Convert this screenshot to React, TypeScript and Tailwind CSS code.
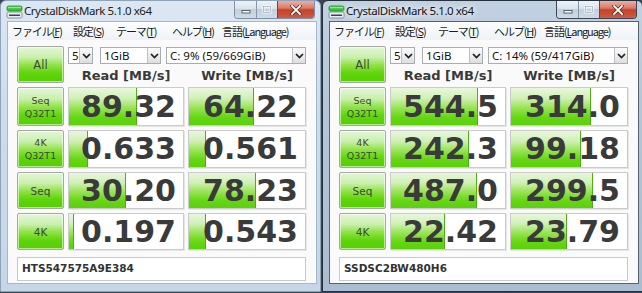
import React from 'react';

type Row = { label: string[]; read: string; write: string; rw: number; ww: number };

const leftRows: Row[] = [
  { label: ['Seq', 'Q32T1'], read: '89.32', write: '64.22', rw: 68, ww: 65 },
  { label: ['4K', 'Q32T1'], read: '0.633', write: '0.561', rw: 19, ww: 17 },
  { label: ['Seq'], read: '30.20', write: '78.23', rw: 57, ww: 67 },
  { label: ['4K'], read: '0.197', write: '0.543', rw: 5, ww: 17 },
];

const rightRows: Row[] = [
  { label: ['Seq', 'Q32T1'], read: '544.5', write: '314.0', rw: 87, ww: 80 },
  { label: ['4K', 'Q32T1'], read: '242.3', write: '99.18', rw: 78, ww: 70 },
  { label: ['Seq'], read: '487.0', write: '299.5', rw: 86, ww: 82 },
  { label: ['4K'], read: '22.42', write: '23.79', rw: 54, ww: 56 },
];

const GREEN_BTN =
  'flex flex-col items-center justify-center rounded-[2px] border border-[#a4a9a2] bg-[linear-gradient(180deg,#e4f6d8_0%,#c8efab_30%,#8fe245_52%,#5fd40c_75%,#55cf00_100%)] shadow-[inset_0_0_0_1px_rgba(255,255,255,0.55)] text-[#3d4838]';

function AppIcon() {
  return (
    <svg width="17" height="14" viewBox="0 0 17 14">
      <rect x="1" y="1" width="15" height="5" rx="1.5" fill="#3cc23c" stroke="#1f8a2a" strokeWidth="0.8" />
      <rect x="2" y="1.8" width="13" height="1.4" fill="#8fe88f" />
      <rect x="1" y="7" width="15" height="6" rx="1.5" fill="#e9eef2" stroke="#6f7a86" strokeWidth="0.8" />
      <rect x="3" y="9.5" width="11" height="1.5" fill="#3c4650" />
    </svg>
  );
}

function CaptionButtons({ active }: { active: boolean }) {
  return (
    <div
      className={
        active
          ? 'flex h-[18px] overflow-hidden rounded-b-[4px] border border-t-0 border-[#3a4656]'
          : 'flex h-[18px] overflow-hidden rounded-b-[4px] border border-t-0 border-[#7f90a4]'
      }
    >
      <div className="flex w-[22px] items-center justify-center border-r border-[#8796a8] bg-[linear-gradient(180deg,#eef3f8_0%,#d9e3ed_45%,#c2cfdd_50%,#cfdbe7_100%)]">
        <svg width="10" height="8" viewBox="0 0 10 8">
          <rect x="1" y="4.5" width="8" height="2.5" fill="#fff" stroke="#3b4552" strokeWidth="0.8" />
        </svg>
      </div>
      <div className="flex w-[20px] items-center justify-center bg-[linear-gradient(180deg,#eef3f8_0%,#d9e3ed_45%,#c2cfdd_50%,#cfdbe7_100%)]">
        <svg width="10" height="9" viewBox="0 0 10 9">
          <rect x="1.5" y="1.5" width="7" height="6" fill="none" stroke="#fff" strokeWidth="2" />
          <rect x="1.5" y="1.5" width="7" height="6" fill="none" stroke="#8a97a6" strokeWidth="0.6" />
        </svg>
      </div>
      <div className="flex w-[37px] items-center justify-center border-l border-[#8a3a2e] bg-[linear-gradient(180deg,#eab0a4_0%,#d97a66_42%,#c4432c_52%,#d05a40_100%)]">
        <svg width="12" height="10" viewBox="0 0 12 10">
          <path d="M2 1 L10 9 M10 1 L2 9" stroke="#4a2a26" strokeWidth="3.2" strokeLinecap="square" />
          <path d="M2 1 L10 9 M10 1 L2 9" stroke="#fff" strokeWidth="1.8" strokeLinecap="square" />
        </svg>
      </div>
    </div>
  );
}

function Chevron() {
  return (
    <svg width="9" height="6" viewBox="0 0 9 6">
      <polyline points="1,1 4.5,4.5 8,1" fill="none" stroke="#1e1e1e" strokeWidth="1.7" />
    </svg>
  );
}

function Combo({ text, w }: { text: string; w: string }) {
  return (
    <div className={`flex h-[17px] ${w} border border-[#a7adb5] bg-white`}>
      <span className="flex-1 overflow-hidden whitespace-nowrap pl-[3px] font-['Noto_Sans',sans-serif] text-[11.5px] leading-[15px] text-[#111]">
        {text}
      </span>
      <span className="flex w-[13px] items-center justify-center border-l border-[#b9c0c8] bg-[linear-gradient(180deg,#fbfbfb,#dedede)]">
        <Chevron />
      </span>
    </div>
  );
}

function ScoreCell({ value, fill }: { value: string; fill: number }) {
  return (
    <div className="relative flex items-center justify-end overflow-hidden border border-[#cbcbcb] bg-white pr-[7px] shadow-[1px_1px_0_#e6e6e6]">
      <div
        className="absolute inset-y-0 left-0 border-r border-[#4fae17] bg-[linear-gradient(180deg,#e8f7dd_0%,#d0f0b6_28%,#96e350_55%,#64d614_80%,#5bd208_100%)]"
        style={{ width: fill }}
      />
      <span className="relative font-['DejaVu_Sans',sans-serif] text-[30px] font-bold leading-[30px] text-[#3a3a3a]">
        {value}
      </span>
    </div>
  );
}

function Client({ drive, model, rows }: { drive: string; model: string; rows: Row[] }) {
  return (
    <div className="flex h-[243px] flex-col bg-[#fafafa] pl-[9px] pt-[6px]">
      <div className="grid grid-cols-[47px_116px_118px] grid-rows-[37px_39px_38px_37px_37px] gap-[4px]">
        <div className={GREEN_BTN}>
          <span className="font-['DejaVu_Sans',sans-serif] text-[11.5px] leading-[14px]">All</span>
        </div>
        <div className="col-span-2 flex flex-col">
          <div className="mt-[1px] flex">
            <Combo text="5" w="w-[25px]" />
            <div className="ml-[7px]">
              <Combo text="1GiB" w="w-[61px]" />
            </div>
            <div className="ml-[5px]">
              <Combo text={drive} w="w-[140px]" />
            </div>
          </div>
          <div className="mt-[4px] flex h-[15px] font-['DejaVu_Sans',sans-serif] text-[13px] font-bold leading-[16px] text-[#3a3a3a]">
            <span className="w-[116px] text-center">Read [MB/s]</span>
            <span className="ml-[4px] w-[118px] text-center">Write [MB/s]</span>
          </div>
        </div>
        {rows.map((r) => (
          <React.Fragment key={r.label.join('') + r.read}>
            <div className={GREEN_BTN}>
              {r.label.length > 1 ? (
                <>
                  <span className="font-['DejaVu_Sans',sans-serif] text-[9.5px] leading-[13px]">{r.label[0]}</span>
                  <span className="font-['DejaVu_Sans',sans-serif] text-[9.5px] leading-[13px]">{r.label[1]}</span>
                </>
              ) : (
                <span className="font-['DejaVu_Sans',sans-serif] text-[10.5px] leading-[14px]">{r.label[0]}</span>
              )}
            </div>
            <ScoreCell value={r.read} fill={r.rw} />
            <ScoreCell value={r.write} fill={r.ww} />
          </React.Fragment>
        ))}
      </div>
      <div className="mt-[7px] flex h-[24px] w-[289px] items-center border border-[#c9c9c9] bg-white pl-[4px] font-['DejaVu_Sans',sans-serif] text-[10.5px] font-bold text-[#333]">
        {model}
      </div>
    </div>
  );
}

function MenuBar() {
  const items: [string, string, string, string][] = [
    ['ファイル(', 'F', ')', 'w-[61px]'],
    ['設定(', 'S', ')', 'w-[43px]'],
    ['テーマ(', 'T', ')', 'w-[56px]'],
    ['ヘルプ(', 'H', ')', 'w-[50px]'],
    ['言語(', 'L', 'anguage)', 'w-[80px]'],
  ];
  return (
    <div className="flex h-[18px] items-center bg-[linear-gradient(180deg,#fdfdfe,#eef2f7)] pl-[4px] font-['Noto_Sans_CJK_JP','Noto_Sans',sans-serif] text-[11px] leading-[14px] text-[#1a1a1a]">
      {items.map(([a, u, b, w]) => (
        <span key={a} className={`${w} whitespace-nowrap tracking-[-1.1px]`}>
          {a}
          <u>{u}</u>
          {b}
        </span>
      ))}
    </div>
  );
}

function CdmWindow({ active, drive, model, rows }: { active: boolean; drive: string; model: string; rows: Row[] }) {
  return (
    <div
      className={
        active
          ? 'flex h-[292px] w-[321px] shrink-0 flex-col rounded-t-[6px] border border-[#26303b] bg-[linear-gradient(180deg,#c2d1e1_0%,#b4c6d9_35%,#a9bcd1_100%)]'
          : 'flex h-[292px] w-[321px] shrink-0 flex-col rounded-t-[6px] border border-[#8ea3ba] bg-[linear-gradient(180deg,#dce7f3_0%,#cedded_35%,#c5d6e8_100%)]'
      }
    >
      <div className="flex h-[20px] items-start">
        <div className="ml-[5px] mt-[4px]">
          <AppIcon />
        </div>
        <span
          className={
            active
              ? "ml-[1px] mt-[3px] font-['Noto_Sans',sans-serif] text-[11.5px] leading-[14px] tracking-[-0.45px] text-[#111] [text-shadow:0_0_8px_#fff,0_0_4px_#fff]"
              : "ml-[1px] mt-[3px] font-['Noto_Sans',sans-serif] text-[11.5px] leading-[14px] tracking-[-0.45px] text-[#222]"
          }
        >
          CrystalDiskMark 5.1.0 x64
        </span>
        <div className="ml-auto mr-[5px]">
          <CaptionButtons active={active} />
        </div>
      </div>
      <div
        className={
          active
            ? 'ml-[6px] w-[310px] border border-[#56636f]'
            : 'ml-[6px] w-[310px] border border-[#a6b7ca]'
        }
      >
        <MenuBar />
        <Client drive={drive} model={model} rows={rows} />
      </div>
    </div>
  );
}

export default function App() {
  return (
    <div className="flex h-[293px] w-[642px] overflow-hidden bg-[#3a4553]">
      <CdmWindow active={false} drive="C: 9% (59/669GiB)" model="HTS547575A9E384" rows={leftRows} />
      <div className="w-[1px] shrink-0" />
      <CdmWindow active drive="C: 14% (59/417GiB)" model="SSDSC2BW480H6" rows={rightRows} />
    </div>
  );
}
